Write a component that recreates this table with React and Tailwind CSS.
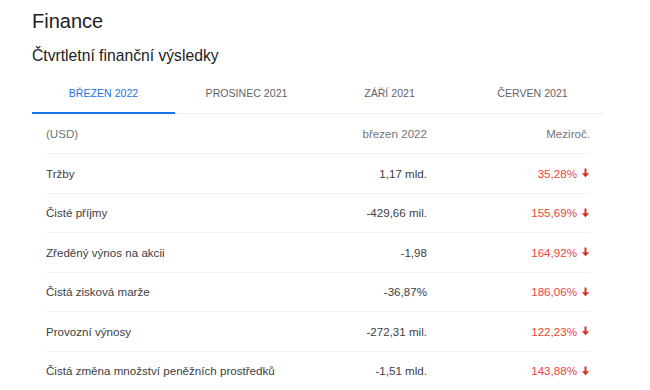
const tabs = ["BŘEZEN 2022", "PROSINEC 2021", "ZÁŘÍ 2021", "ČERVEN 2021"];

const rows = [
  { label: "Tržby", value: "1,17 mld.", change: "35,28%" },
  { label: "Čisté příjmy", value: "-429,66 mil.", change: "155,69%" },
  { label: "Zředěný výnos na akcii", value: "-1,98", change: "164,92%" },
  { label: "Čistá zisková marže", value: "-36,87%", change: "186,06%" },
  { label: "Provozní výnosy", value: "-272,31 mil.", change: "122,23%" },
  {
    label: "Čistá změna množství peněžních prostředků",
    value: "-1,51 mld.",
    change: "143,88%",
  },
];

function ArrowDown() {
  return (
    <svg width="9" height="10" viewBox="0 0 9 10" className="ml-[4px]">
      <path d="M4.5 0.5v6" stroke="#d93025" strokeWidth="2" />
      <path d="M0.8 5.2L4.5 9.2 8.2 5.2z" fill="#d93025" />
    </svg>
  );
}

export default function App() {
  return (
    <div
      className="w-[650px] h-[390px] overflow-hidden bg-white text-[#202124]"
      style={{ fontFamily: '"Liberation Sans", Arial, sans-serif' }}
    >
      <div className="pl-[32px] pt-[9px]">
        <h1 className="text-[20px] leading-[24px]">Finance</h1>
        <h2 className="mt-[13px] text-[15.7px] leading-[20px]">
          Čtvrtletní finanční výsledky
        </h2>

        <div className="mt-[9px] w-[572px] flex border-b border-[#eceff1]">
          {tabs.map((tab, i) => (
            <div
              key={tab}
              className={
                "w-[143px] h-[39px] flex items-center justify-center text-[10.6px] font-medium border-b-2 -mb-px " +
                (i === 0
                  ? "text-[#1a73e8] border-[#1a73e8]"
                  : "text-[#5f6368] border-transparent")
              }
            >
              {tab}
            </div>
          ))}
        </div>

        <div className="ml-[14px] w-[544px] text-[11.6px]">
          <div className="h-[40px] flex items-center border-b border-[#f1f3f4] text-[#70757a]">
            <div className="flex-1">(USD)</div>
            <div className="w-[140px] text-right">březen 2022</div>
            <div className="w-[163px] text-right">Meziroč.</div>
          </div>
          {rows.map((row) => (
            <div
              key={row.label}
              className="h-[39.5px] flex items-center border-b border-[#f1f3f4]"
            >
              <div className="flex-1 text-[#3c4043]">{row.label}</div>
              <div className="w-[140px] text-right text-[#3c4043]">
                {row.value}
              </div>
              <div className="w-[163px] flex items-center justify-end text-[#e8453c]">
                {row.change}
                <ArrowDown />
              </div>
            </div>
          ))}
        </div>
      </div>
    </div>
  );
}
